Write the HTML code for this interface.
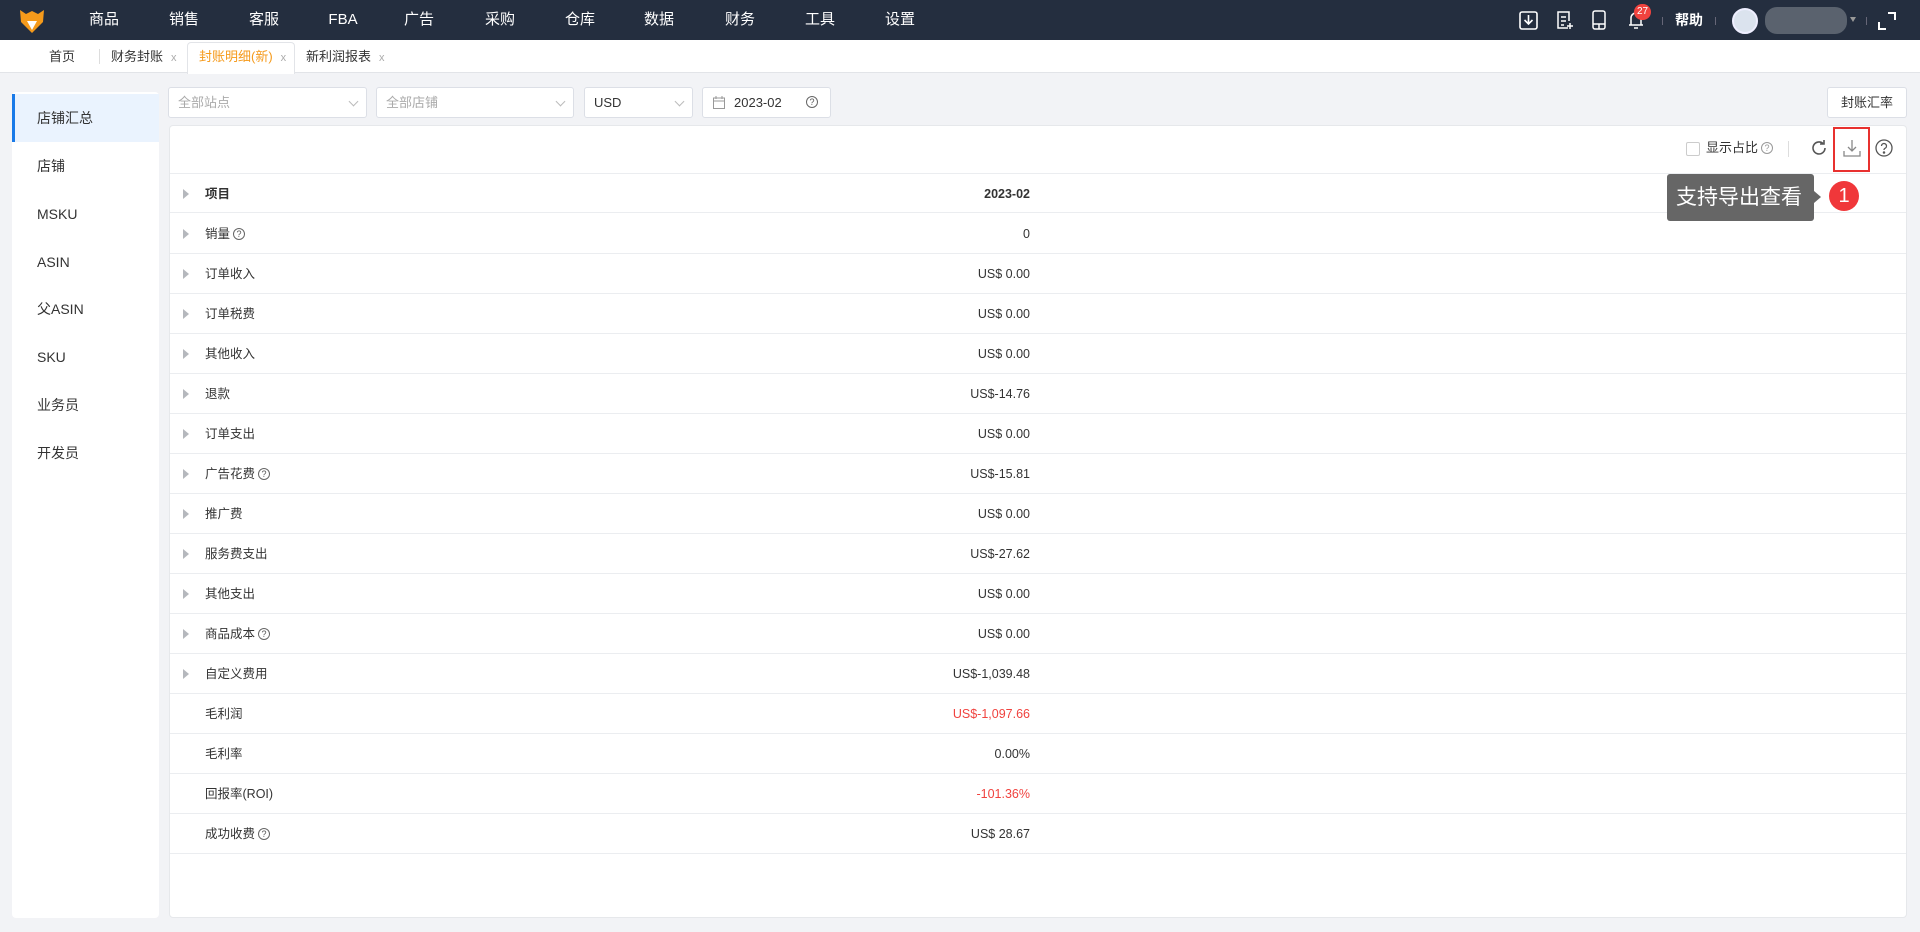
<!DOCTYPE html>
<html><head><meta charset="utf-8"><style>
*{box-sizing:border-box;margin:0;padding:0}
body{width:1920px;height:932px;overflow:hidden;background:#f2f3f6;font-family:"Liberation Sans","Noto Sans CJK SC",sans-serif;color:#333;font-size:13px;position:relative}
.abs{position:absolute}
.top{position:absolute;left:0;top:0;width:1920px;height:40px;background:#242e3f;color:#fff}
.nav{position:absolute;top:0;height:40px;line-height:40px;font-size:15px;transform:translateX(-50%)}
.tabs{position:absolute;top:40px;left:0;width:1920px;height:33px;background:#fff;border-bottom:1px solid #e2e4e8}
.tab{position:absolute;top:0;height:33px;line-height:33px;font-size:13px;color:#333}
.tab .x{color:#aaa;font-size:11px;margin-left:8px}
.side{position:absolute;left:12px;top:92px;width:147px;height:826px;background:#fff;border-radius:4px}
.si{position:absolute;left:0;width:147px;height:48px;line-height:48px;padding-left:25px;font-size:14px;color:#333}
.sel{position:absolute;top:87px;height:31px;background:#fff;border:1px solid #dcdfe6;border-radius:3px;line-height:29px;padding-left:9px;font-size:13px;color:#aaa}
.sel .ar{position:absolute;right:9px;top:10px;width:7px;height:7px;border-right:1px solid #bbb;border-bottom:1px solid #bbb;transform:rotate(45deg)}
.panel{position:absolute;left:169px;top:125px;width:1738px;height:793px;background:#fff;border-radius:4px;border:1px solid #e6e8eb}
.row{position:absolute;left:0;width:1736px;height:40px;border-bottom:1px solid #ebedf0;line-height:40px}
.row .tri{position:absolute;left:13px;top:15px;width:0;height:0;border-left:6px solid #b5b8bd;border-top:5px solid transparent;border-bottom:5px solid transparent}
.row .lb{position:absolute;left:35px;font-size:12.5px;color:#333}
.row .v{position:absolute;right:876px;font-size:12.5px;color:#333}
.q{display:inline-block;width:12px;height:12px;border:1px solid #666;border-radius:50%;font-size:9px;line-height:10px;text-align:center;vertical-align:1px;margin-left:3px;color:#555}
.red{color:#f0433f!important}
</style></head><body>
<div class="top">
 <svg class="abs" style="left:18px;top:8px" width="28" height="26" viewBox="0 0 28 26"><path d="M2 2 L8 6 L14 3 L20 6 L26 2 L25 14 L14 25 L3 14Z" fill="#f59a1b"/><path d="M9 13 L14 22 L19 13Z" fill="#fff"/></svg>
 <div class="nav" style="left:104px">商品</div><div class="nav" style="left:184px">销售</div><div class="nav" style="left:264px">客服</div><div class="nav" style="left:343px">FBA</div><div class="nav" style="left:419px">广告</div><div class="nav" style="left:500px">采购</div><div class="nav" style="left:580px">仓库</div><div class="nav" style="left:659px">数据</div><div class="nav" style="left:740px">财务</div><div class="nav" style="left:820px">工具</div><div class="nav" style="left:900px">设置</div>
 <svg class="abs" style="left:1519px;top:11px" width="19" height="19" viewBox="0 0 19 19" fill="none" stroke="#fff" stroke-width="1.6"><rect x="1" y="1" width="17" height="17" rx="2"/><path d="M9.5 4v9M5.5 9l4 4 4-4"/></svg>
 <svg class="abs" style="left:1556px;top:11px" width="18" height="20" viewBox="0 0 18 20" fill="none" stroke="#fff" stroke-width="1.5"><path d="M12 17H2V1h11v9"/><path d="M5 6h5M5 10h5M5 14h3M14 12v6M11 15h6"/></svg>
 <svg class="abs" style="left:1592px;top:10px" width="14" height="20" viewBox="0 0 14 20" fill="none" stroke="#fff" stroke-width="1.5"><rect x="1" y="1" width="12" height="18" rx="2"/><path d="M1 14h12M7 14v5"/></svg>
 <svg class="abs" style="left:1628px;top:10px" width="16" height="20" viewBox="0 0 16 20" fill="none" stroke="#fff" stroke-width="1.5"><path d="M3 15V8a5 5 0 0 1 10 0v7M1 15h14M6 18h4"/></svg>
 <div class="abs" style="left:1634px;top:4px;width:17px;height:16px;border-radius:8px;background:#f0433f;font-size:10px;line-height:16px;text-align:center">27</div>
 <div class="abs" style="left:1662px;top:17px;width:1px;height:8px;background:#667"></div>
 <div class="abs" style="left:1675px;top:0;line-height:40px;font-size:14px;font-weight:bold">帮助</div>
 <div class="abs" style="left:1715px;top:17px;width:1px;height:8px;background:#667"></div>
 <div class="abs" style="left:1732px;top:8px;width:26px;height:26px;border-radius:50%;background:#dbe3ee;border:2px solid #eef"></div>
 <div class="abs" style="left:1765px;top:7px;width:82px;height:27px;border-radius:12px;background:#5a626e"></div>
 <div class="abs" style="left:1850px;top:17px;border-top:5px solid #999;border-left:3px solid transparent;border-right:3px solid transparent"></div>
 <div class="abs" style="left:1866px;top:17px;width:1px;height:8px;background:#667"></div>
 <svg class="abs" style="left:1878px;top:12px" width="18" height="18" viewBox="0 0 18 18" fill="none" stroke="#fff" stroke-width="2"><path d="M1 10v7h7M17 8V1h-7"/></svg>
</div>
<div class="tabs">
 <div class="tab" style="left:49px">首页</div>
 <div class="abs" style="left:99px;top:9px;width:1px;height:15px;background:#ddd"></div>
 <div class="tab" style="left:111px">财务封账<span class="x">x</span></div>
 <div class="abs" style="left:187px;top:2px;width:108px;height:32px;background:#fff;border:1px solid #e2e4e8;border-bottom:none;border-radius:4px 4px 0 0"></div>
 <div class="tab" style="left:199px;color:#f59a1b">封账明细(新)<span class="x">x</span></div>
 <div class="tab" style="left:306px">新利润报表<span class="x">x</span></div>
</div>
<div class="side">
 <div class="si" style="top:2px;background:#eaf3fe;border-left:3px solid #1a7ae8;padding-left:22px">店铺汇总</div>
 <div class="si" style="top:50px">店铺</div>
 <div class="si" style="top:98px">MSKU</div>
 <div class="si" style="top:146px">ASIN</div>
 <div class="si" style="top:193px">父ASIN</div>
 <div class="si" style="top:241px">SKU</div>
 <div class="si" style="top:289px">业务员</div>
 <div class="si" style="top:337px">开发员</div>
</div>
<div class="sel" style="left:168px;width:199px">全部站点<span class="ar"></span></div>
<div class="sel" style="left:376px;width:198px">全部店铺<span class="ar"></span></div>
<div class="sel" style="left:584px;width:109px;color:#333">USD<span class="ar"></span></div>
<div class="sel" style="left:702px;width:129px;color:#333;padding-left:31px"><svg class="abs" style="left:10px;top:8px" width="12" height="13" viewBox="0 0 12 13" fill="none" stroke="#999"><rect x=".5" y="2" width="11" height="10.5"/><path d="M.5 5h11M3 0v3M9 0v3"/></svg>2023-02<span class="q" style="position:absolute;right:12px;top:8px">?</span></div>
<div class="abs" style="left:1827px;top:87px;width:80px;height:31px;background:#fff;border:1px solid #dcdfe6;border-radius:3px;line-height:29px;text-align:center;font-size:13px;color:#333">封账汇率</div>
<div class="panel">
 <div class="abs" style="left:1516px;top:16px;width:14px;height:14px;border:1px solid #ccc;border-radius:2px"></div>
 <div class="abs" style="left:1536px;top:12px;font-size:13px;line-height:20px">显示占比<span class="q" style="color:#999;border-color:#999">?</span></div>
 <div class="abs" style="left:1618px;top:15px;width:1px;height:16px;background:#ddd"></div>
 <svg class="abs" style="left:1640px;top:13px" width="18" height="18" viewBox="0 0 18 18" fill="none" stroke="#555" stroke-width="1.6"><path d="M15 9a6 6 0 1 1-2-4.5"/><path d="M14 1v4h-4"/></svg>
 <div class="abs" style="left:1663px;top:1px;width:37px;height:45px;border:2px solid #e8312f"></div>
 <svg class="abs" style="left:1673px;top:13px" width="18" height="18" viewBox="0 0 18 18" fill="none" stroke="#888" stroke-width="1.3"><path d="M9 1v11M5 8l4 4 4-4M1 12v5h16v-5"/></svg>
 <svg class="abs" style="left:1705px;top:13px" width="18" height="18" viewBox="0 0 18 18" fill="none" stroke="#555" stroke-width="1.3"><circle cx="9" cy="9" r="8"/><path d="M6.5 7a2.5 2.5 0 1 1 3.5 2.3c-.7.3-1 .8-1 1.5V11"/><circle cx="9" cy="13.5" r=".6" fill="#555"/></svg>
 <div class="row" style="top:47px;border-top:1px solid #ebedf0;font-weight:bold"><span class="tri"></span><span class="lb" style="font-weight:bold">项目</span><span class="v" style="font-weight:bold">2023-02</span></div>
 <div class="row" style="top:88px"><span class="tri"></span><span class="lb">销量<span class="q">?</span></span><span class="v">0</span></div>
 <div class="row" style="top:128px"><span class="tri"></span><span class="lb">订单收入</span><span class="v">US$ 0.00</span></div>
 <div class="row" style="top:168px"><span class="tri"></span><span class="lb">订单税费</span><span class="v">US$ 0.00</span></div>
 <div class="row" style="top:208px"><span class="tri"></span><span class="lb">其他收入</span><span class="v">US$ 0.00</span></div>
 <div class="row" style="top:248px"><span class="tri"></span><span class="lb">退款</span><span class="v">US$-14.76</span></div>
 <div class="row" style="top:288px"><span class="tri"></span><span class="lb">订单支出</span><span class="v">US$ 0.00</span></div>
 <div class="row" style="top:328px"><span class="tri"></span><span class="lb">广告花费<span class="q">?</span></span><span class="v">US$-15.81</span></div>
 <div class="row" style="top:368px"><span class="tri"></span><span class="lb">推广费</span><span class="v">US$ 0.00</span></div>
 <div class="row" style="top:408px"><span class="tri"></span><span class="lb">服务费支出</span><span class="v">US$-27.62</span></div>
 <div class="row" style="top:448px"><span class="tri"></span><span class="lb">其他支出</span><span class="v">US$ 0.00</span></div>
 <div class="row" style="top:488px"><span class="tri"></span><span class="lb">商品成本<span class="q">?</span></span><span class="v">US$ 0.00</span></div>
 <div class="row" style="top:528px"><span class="tri"></span><span class="lb">自定义费用</span><span class="v">US$-1,039.48</span></div>
 <div class="row" style="top:568px"><span class="lb">毛利润</span><span class="v red">US$-1,097.66</span></div>
 <div class="row" style="top:608px"><span class="lb">毛利率</span><span class="v">0.00%</span></div>
 <div class="row" style="top:648px"><span class="lb">回报率(ROI)</span><span class="v red">-101.36%</span></div>
 <div class="row" style="top:688px"><span class="lb">成功收费<span class="q">?</span></span><span class="v">US$ 28.67</span></div>
</div>
<div class="abs" style="left:1667px;top:174px;width:147px;height:47px;background:#666;border-radius:3px;color:#fff;font-size:21px;line-height:47px;padding-left:9px">支持导出查看</div>
<div class="abs" style="left:1814px;top:191px;border-left:7px solid #666;border-top:6px solid transparent;border-bottom:6px solid transparent"></div>
<div class="abs" style="left:1829px;top:181px;width:30px;height:30px;border-radius:50%;background:#f0373a;color:#fff;font-size:20px;line-height:30px;text-align:center">1</div>
</body></html>
